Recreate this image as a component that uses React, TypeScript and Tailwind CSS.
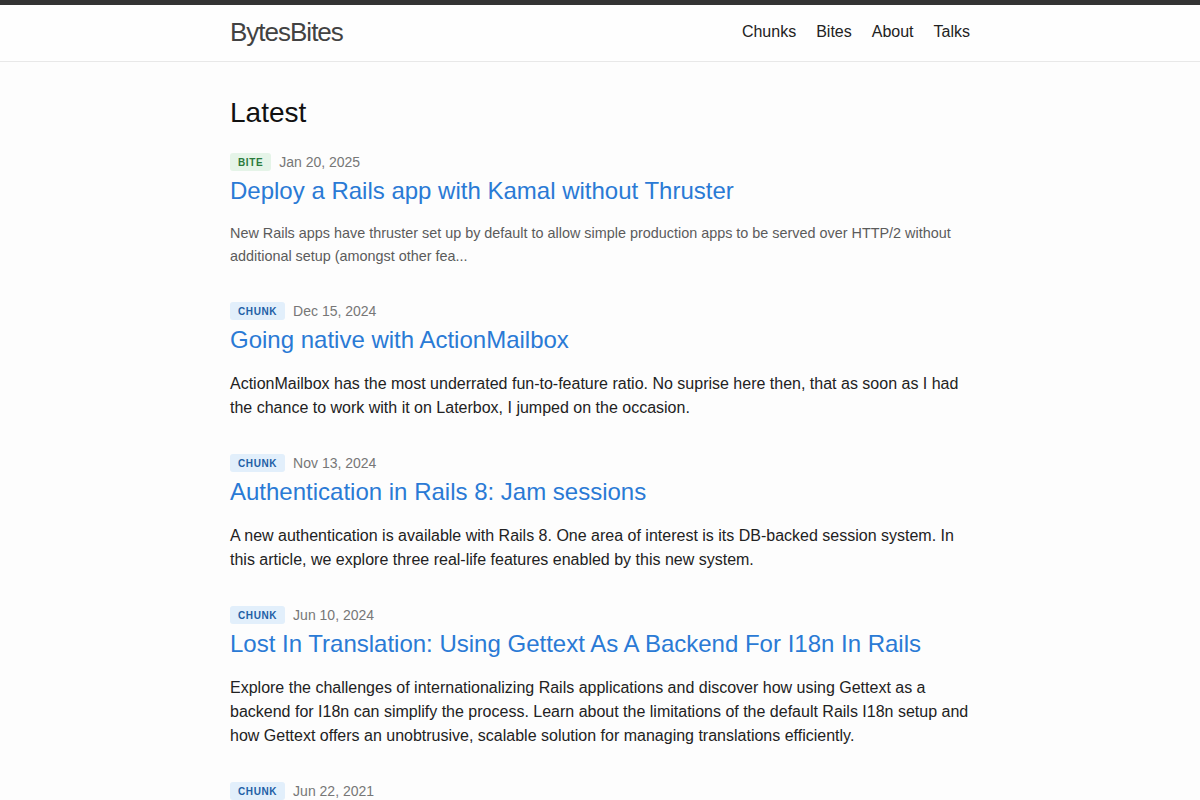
import React from "react";

type Post = {
  kind: "bite" | "chunk";
  date: string;
  title: string;
  excerpt: string;
};

const posts: Post[] = [
  {
    kind: "bite",
    date: "Jan 20, 2025",
    title: "Deploy a Rails app with Kamal without Thruster",
    excerpt:
      "New Rails apps have thruster set up by default to allow simple production apps to be served over HTTP/2 without additional setup (amongst other fea...",
  },
  {
    kind: "chunk",
    date: "Dec 15, 2024",
    title: "Going native with ActionMailbox",
    excerpt:
      "ActionMailbox has the most underrated fun-to-feature ratio. No suprise here then, that as soon as I had the chance to work with it on Laterbox, I jumped on the occasion.",
  },
  {
    kind: "chunk",
    date: "Nov 13, 2024",
    title: "Authentication in Rails 8: Jam sessions",
    excerpt:
      "A new authentication is available with Rails 8. One area of interest is its DB-backed session system. In this article, we explore three real-life features enabled by this new system.",
  },
  {
    kind: "chunk",
    date: "Jun 10, 2024",
    title: "Lost In Translation: Using Gettext As A Backend For I18n In Rails",
    excerpt:
      "Explore the challenges of internationalizing Rails applications and discover how using Gettext as a backend for I18n can simplify the process. Learn about the limitations of the default Rails I18n setup and how Gettext offers an unobtrusive, scalable solution for managing translations efficiently.",
  },
  {
    kind: "chunk",
    date: "Jun 22, 2021",
    title: "Rails and Webpacker: a journey",
    excerpt: "",
  },
];

function Badge({ kind }: { kind: Post["kind"] }) {
  if (kind === "bite") {
    return (
      <span className="inline-flex h-[18px] items-center rounded-[3px] bg-[#e5f4e8] px-2 text-[10px] font-bold uppercase tracking-[0.6px] text-[#2b7a3b]">
        bite
      </span>
    );
  }
  return (
    <span className="inline-flex h-[18px] items-center rounded-[3px] bg-[#e2effb] px-2 text-[10px] font-bold uppercase tracking-[0.6px] text-[#1f5fa6]">
      chunk
    </span>
  );
}

function PostItem({ post }: { post: Post }) {
  const isBite = post.kind === "bite";
  return (
    <article className="mb-[34px]">
      <div className="flex h-[18px] items-center gap-[8px]">
        <Badge kind={post.kind} />
        <span className="text-[14px] text-[#777]">{post.date}</span>
      </div>
      <h2 className="mt-[5px] text-[24px] leading-[30px] text-[#2a7ad5]">
        <a href="#">{post.title}</a>
      </h2>
      {post.excerpt && (
        <p
          className={
            isBite
              ? "mt-[16px] text-[14.4px] leading-[23px] text-[#5b5b5b]"
              : "mt-[17px] text-[16px] leading-[24px] text-[#222]"
          }
        >
          {post.excerpt}
        </p>
      )}
    </article>
  );
}

export default function App() {
  return (
    <div className="min-h-screen bg-[#fdfdfd] font-['Liberation_Sans',Arial,sans-serif] text-[#111]">
      <div className="h-[5px] bg-[#333]" />
      <header className="h-[57px] border-b border-[#e8e8e8] bg-[#fefefe]">
        <div className="mx-auto flex h-[54px] w-[740px] items-center justify-between">
          <a href="#" className="text-[26px] tracking-[-1px] text-[#424242]">
            BytesBites
          </a>
          <nav className="flex gap-5 text-[16px] text-[#222]">
            <a href="#">Chunks</a>
            <a href="#">Bites</a>
            <a href="#">About</a>
            <a href="#">Talks</a>
          </nav>
        </div>
      </header>
      <main className="mx-auto w-[740px] pt-[34px]">
        <h1 className="mb-[23px] text-[28px] leading-[34px] text-[#111]">Latest</h1>
        {posts.map((p) => (
          <PostItem key={p.title} post={p} />
        ))}
      </main>
    </div>
  );
}
